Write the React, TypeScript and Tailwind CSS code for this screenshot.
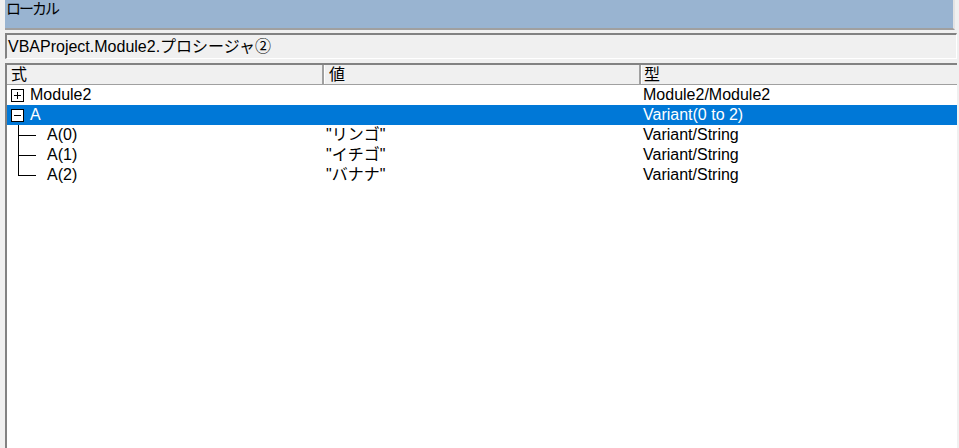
import React from "react";

type Row = {
  name: string;
  value: string;
  type: string;
  kind: "plus" | "minus" | "mid" | "last";
  selected?: boolean;
};

const rows: Row[] = [
  { name: "Module2", value: "", type: "Module2/Module2", kind: "plus" },
  { name: "A", value: "", type: "Variant(0 to 2)", kind: "minus", selected: true },
  { name: "A(0)", value: "\"リンゴ\"", type: "Variant/String", kind: "mid" },
  { name: "A(1)", value: "\"イチゴ\"", type: "Variant/String", kind: "mid" },
  { name: "A(2)", value: "\"バナナ\"", type: "Variant/String", kind: "last" },
];

const font = {
  fontFamily: '"Liberation Sans", "Noto Sans CJK JP", sans-serif',
};

const Expander: React.FC<{ open: boolean }> = ({ open }) => (
  <div className="relative w-[13px] h-[13px] border border-black bg-white shrink-0">
    <div className="absolute left-[2px] right-[2px] top-[5px] h-px bg-black" />
    {!open && <div className="absolute top-[2px] bottom-[2px] left-[5px] w-px bg-black" />}
  </div>
);

const Branch: React.FC<{ last: boolean }> = ({ last }) => (
  <div className="relative w-[38px] h-[20px] shrink-0">
    <div className={`absolute left-[11px] w-px bg-black top-0 ${last ? "h-[10px]" : "h-[20px]"}`} />
    <div className="absolute left-[11px] top-[10px] w-[18px] h-px bg-black" />
  </div>
);

export default function App() {
  return (
    <div className="w-[959px] h-[448px] bg-[#f0f0f0] overflow-hidden text-black" style={font}>
      <div className="ml-[5px] mr-[4px] h-[30px] bg-[#99b4d1] border-r-2 border-b-2 border-r-[#e3e3e3] border-b-[#a0a0a0]">
        <div className="pl-[1px] text-[15px] leading-[17px] tracking-[-2px]">ローカル</div>
      </div>

      <div className="ml-[5px] mr-[2px] mt-[3px] h-[26px] border-t-2 border-l-2 border-t-[#828282] border-l-[#828282] border-r border-b border-r-[#ffffff] border-b-[#ffffff] flex items-center">
        <span className="pl-[1px] text-[16px] leading-[18px]">VBAProject.Module2.プロシージャ②</span>
      </div>

      <div className="ml-[5px] mr-[2px] mt-[4px] h-[400px] border-t-2 border-l-2 border-t-[#828282] border-l-[#828282] bg-white flex flex-col">
        <div className="flex h-[20px] bg-[#f0f0f0] border-b border-[#a0a0a0] text-[16px] leading-[19px]">
          <div className="w-[317px] pl-[4px] border-r-2 border-r-[#a0a0a0]">式</div>
          <div className="w-[317px] pl-[4px] border-l border-l-white border-r-2 border-r-[#a0a0a0]">値</div>
          <div className="flex-1 pl-[2px] border-l border-l-white">型</div>
        </div>
        {rows.map((r) => (
          <div
            key={r.name}
            className={`flex h-[20px] items-center text-[16px] leading-[20px] ${r.selected ? "bg-[#0078d7] text-white" : ""}`}
          >
            <div className="w-[317px] flex items-center">
              {r.kind === "plus" || r.kind === "minus" ? (
                <>
                  <div className="w-[4px]" />
                  <Expander open={r.kind === "minus"} />
                  <span className="ml-[6px]">{r.name}</span>
                </>
              ) : (
                <>
                  <Branch last={r.kind === "last"} />
                  <span className="ml-[2px]">{r.name}</span>
                </>
              )}
            </div>
            <div className="w-[319px] pl-[2px]">{r.value}</div>
            <div className="flex-1">{r.type}</div>
          </div>
        ))}
      </div>
    </div>
  );
}
